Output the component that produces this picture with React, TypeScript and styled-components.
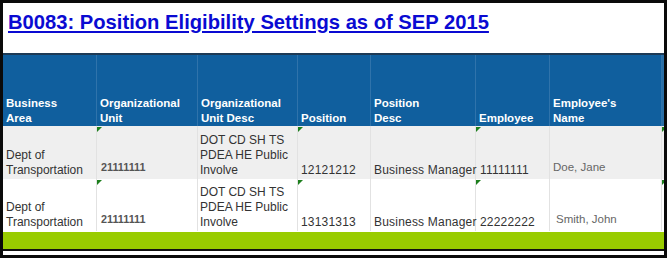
import React from "react";
import styled, { createGlobalStyle } from "styled-components";

const Global = createGlobalStyle`
  html, body { margin: 0; padding: 0; background: #000; }
  body { font-family: "Liberation Sans", Arial, sans-serif; }
`;

const COLS = "94px 101px 100px 73px 105px 74px 112px 2px";

const Frame = styled.div`
  width: 667px;
  height: 258px;
  box-sizing: border-box;
  border: 3px solid #0a0a0a;
  display: flex;
  flex-direction: column;
  background: #fff;
  overflow: hidden;
`;

const TitleBar = styled.div`
  height: 52px;
  flex-shrink: 0;
  box-sizing: border-box;
  padding: 7px 0 0 5px;
  background: #fff;
  border-bottom: 2px solid #1d3a55;
`;

const Title = styled.a`
  font-family: "Liberation Sans", Arial, sans-serif;
  font-weight: bold;
  font-size: 20.2px;
  line-height: 24px;
  color: #0a0ad2;
  text-decoration: underline;
  text-underline-offset: 2px;
`;

const HeaderRow = styled.div`
  display: grid;
  grid-template-columns: ${COLS};
  height: 71px;
  flex-shrink: 0;
  background: #105f9e;
`;

const HeadCell = styled.div`
  display: flex;
  align-items: flex-end;
  box-sizing: border-box;
  padding: 0 0 0 3px;
  border-right: 1px solid #2f73ab;
  color: #fff;
  font-weight: bold;
  font-size: 11.5px;
  line-height: 15px;
  &:last-child { border-right: none; background: #2a6fa6; }
`;

const Row = styled.div<{ $alt?: boolean; $h: number }>`
  display: grid;
  grid-template-columns: ${COLS};
  height: ${(p) => p.$h}px;
  flex-shrink: 0;
  background: ${(p) => (p.$alt ? "#efefef" : "#fff")};
`;

type Kind = "text" | "code" | "name" | "num";

const Cell = styled.div<{ $kind?: Kind; $pl?: number }>`
  position: relative;
  display: flex;
  align-items: flex-end;
  box-sizing: border-box;
  padding-left: ${(p) => p.$pl ?? 3}px;
  padding-bottom: ${(p) => (p.$kind === "code" || p.$kind === "name" ? 4 : 1)}px;
  border-right: 1px solid #e2e2e2;
  font-size: ${(p) => (p.$kind === "code" ? 10.8 : p.$kind === "name" ? 11.5 : 12)}px;
  font-weight: ${(p) => (p.$kind === "code" ? "bold" : "normal")};
  letter-spacing: ${(p) => (p.$kind === "num" ? 0.2 : 0)}px;
  color: ${(p) => (p.$kind === "code" ? "#555" : p.$kind === "name" ? "#666" : "#333")};
  line-height: 15px;
  white-space: ${(p) => (p.$kind === "num" || p.$kind === "name" ? "nowrap" : "pre-line")};
  &:last-child { border-right: none; }
`;

const Mark = styled.span`
  position: absolute;
  left: 0;
  top: 1px;
  width: 0;
  height: 0;
  border-top: 5px solid #1d7f1d;
  border-right: 5px solid transparent;
`;

const GreenBar = styled.div`
  height: 17px;
  flex-shrink: 0;
  background: #99cc00;
  border-bottom: 2px solid #111;
  margin-top: 1px;
`;

const Foot = styled.div`
  flex: 1;
  background: #fff;
`;

const HeadText = styled.span`
  white-space: pre-line;
`;

const headers = [
  "Business\nArea",
  "Organizational\nUnit",
  "Organizational\nUnit Desc",
  "Position",
  "Position\nDesc",
  "Employee",
  "Employee's\nName",
];

const rows = [
  { org: "21111111", pos: "12121212", emp: "11111111", name: "Doe, Jane", namePl: 3, h: 53, alt: true },
  { org: "21111111", pos: "13131313", emp: "22222222", name: "Smith, John", namePl: 6, h: 52, alt: false },
];

export default function App() {
  return (
    <>
      <Global />
      <Frame>
        <TitleBar>
          <Title>B0083: Position Eligibility Settings as of SEP 2015</Title>
        </TitleBar>
        <HeaderRow>
          {headers.map((h) => (
            <HeadCell key={h}>
              <HeadText>{h}</HeadText>
            </HeadCell>
          ))}
          <HeadCell />
        </HeaderRow>
        {rows.map((r, i) => (
          <Row key={i} $alt={r.alt} $h={r.h}>
            <Cell>{"Dept of\nTransportation"}</Cell>
            <Cell $kind="code" $pl={4}>
              <Mark />
              {r.org}
            </Cell>
            <Cell $pl={2}>{"DOT CD SH TS\nPDEA HE Public\nInvolve"}</Cell>
            <Cell $kind="num">
              <Mark />
              {r.pos}
            </Cell>
            <Cell $kind="num" $pl={3}>Business Manager</Cell>
            <Cell $kind="num" $pl={4}>
              <Mark />
              {r.emp}
            </Cell>
            <Cell $kind="name" $pl={r.namePl}>{r.name}</Cell>
            <Cell>
              <Mark />
            </Cell>
          </Row>
        ))}
        <GreenBar />
        <Foot />
      </Frame>
    </>
  );
}
